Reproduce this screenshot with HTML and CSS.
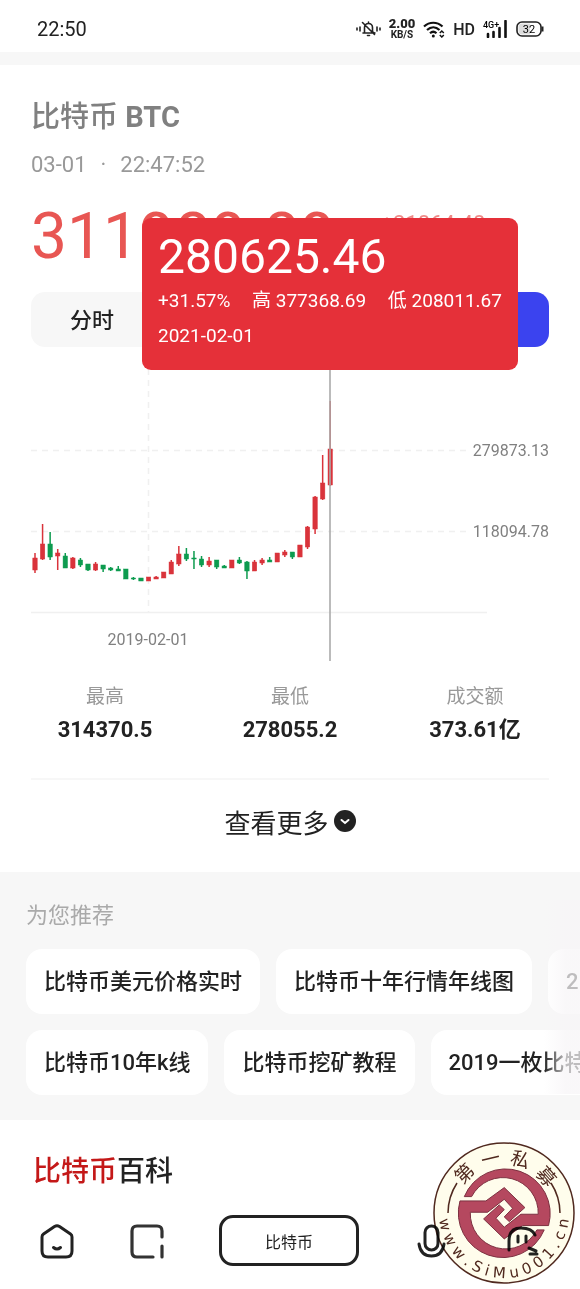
FILE: index.html
```html
<!DOCTYPE html>
<html lang="zh-CN">
<head>
  <meta charset="UTF-8">
  <meta name="viewport" content="width=device-width, initial-scale=1">
  <title>比特币 BTC</title>
  <link rel="stylesheet" href="styles.css">
</head>
<body>
  <header class="status-bar">
    <span class="clock">22:50</span>
    <div class="status-icons">
      <svg width="25" height="18" viewBox="0 0 25 18" fill="none" stroke="#222" stroke-width="1.6" stroke-linecap="round">
        <path d="M1 8v2M4 7v4M21 7v4M24 8v2"/>
        <path d="M7 13h12M8.5 12V7.500a4 4 0 0 1 8 0V12l2 1M12.500 2v1M11.500 15.500h2M6.500 2.500l12 12"/>
      </svg>
      <span class="net-speed"><b>2.00</b><small>KB/S</small></span>
      <svg width="22" height="17" viewBox="0 0 22 17" fill="none" stroke="#111" stroke-width="2.2">
        <path d="M1 5.500c5.500-5 13-5 18.500 0M4 9c3.800-3.500 8.800-3.500 12.500 0M7 12.200c2-1.800 4.500-1.800 6.500 0"/>
        <circle cx="10.300" cy="15" r="1.500" fill="#111" stroke="none"/>
        <path d="M16.800 12l2-2 2 2M16.800 14l2 2 2-2" stroke-width="1.5"/>
      </svg>
      <span class="hd">HD</span>
      <svg width="25" height="18" viewBox="0 0 25 18">
        <text class="cell-type" x="0" y="8">4G+</text>
        <path d="M5 14v3M10.500 12v5M16.500 8v9M22.500 1v16" stroke="#111" stroke-width="2.6" stroke-linecap="round"/>
      </svg>
      <svg width="28" height="16" viewBox="0 0 28 16">
        <rect x="1" y="1" width="24" height="14" rx="5" fill="#fff" stroke="#222" stroke-width="1.6"/>
        <path d="M6 2.500h8v11H6a3.500 3.500 0 0 1-3.500-3.500V6A3.500 3.500 0 0 1 6 2.500z" fill="#ddd"/>
        <path d="M26.500 5.500v5" stroke="#222" stroke-width="2"/>
        <text class="battery-level" x="13" y="12" text-anchor="middle">32</text>
      </svg>
    </div>
  </header>

  <main>
    <section class="quote">
      <h1>比特币 <b>BTC</b></h1>
      <p class="time"><span>03-01</span><span>·</span><span>22:47:52</span></p>

      <div class="price-area">
        <div class="price-row">
          <span class="price">311989.89</span>
          <span class="change">+21864.48</span>
        </div>
        <div class="tabs">
          <button class="tab">分时</button>
          <button class="tab active" aria-label="月K"></button>
        </div>
        <div class="tooltip">
          <strong>280625.46</strong>
          <p class="range"><span>+31.57%</span><span>高 377368.69</span><span>低 208011.67</span></p>
          <p>2021-02-01</p>
        </div>
      </div>

      <svg class="chart" viewBox="0 0 518 300">
        <g class="grid">
          <path d="M0 103.500H436M0 184.500H436M117.500 0V265" stroke-dasharray="6 5"/>
          <path d="M0 265.500H456"/>
        </g>
        <g id="candles"></g>
        <path class="cursor" d="M299 0V314"/>
        <text x="518" y="109" text-anchor="end">279873.13</text>
        <text x="518" y="190" text-anchor="end">118094.78</text>
        <text x="117" y="298" text-anchor="middle">2019-02-01</text>
      </svg>

      <dl class="stats">
        <div><dt>最高</dt><dd>314370.5</dd></div>
        <div><dt>最低</dt><dd>278055.2</dd></div>
        <div><dt>成交额</dt><dd>373.61亿</dd></div>
      </dl>

      <a class="more" href="#">查看更多
        <svg width="22" height="22" viewBox="0 0 22 22">
          <circle cx="11" cy="11" r="11" fill="#222"/>
          <path d="M7.500 10l3.500 3 3.500-3" fill="none" stroke="#fff" stroke-width="2" stroke-linecap="round"/>
        </svg>
      </a>
    </section>

    <section class="recommend">
      <h2>为您推荐</h2>
      <div class="chips">
        <a href="#">比特币美元价格实时</a>
        <a href="#">比特币十年行情年线图</a>
        <a href="#">2</a>
      </div>
      <div class="chips">
        <a href="#">比特币10年k线</a>
        <a href="#">比特币挖矿教程</a>
        <a href="#">2019一枚比特</a>
      </div>
    </section>

    <section class="wiki">
      <h2><em>比特币</em>百科</h2>
    </section>
  </main>

  <nav class="bottom-nav">
    <button aria-label="主页">
      <svg width="36" height="36" viewBox="0 0 36 36" fill="none" stroke="#222" stroke-width="3" stroke-linecap="round" stroke-linejoin="round">
        <path d="M15.500 3.500L4.500 11Q3 12 3 14v14q0 6 6 6h18q6 0 6-6V14q0-2-1.500-3L20.500 3.500Q18 2 15.500 3.500z"/>
        <path d="M14.500 24.500q3.500 3 7 0"/>
      </svg>
    </button>
    <button aria-label="窗口">
      <svg width="36" height="36" viewBox="0 0 36 36" fill="none" stroke="#333" stroke-width="3.2" stroke-linecap="round">
        <path d="M24 34H8q-5 0-5-5V8q0-5 5-5h20q5 0 5 5v6M33 23v11"/>
      </svg>
    </button>
    <button class="search">比特币</button>
    <button aria-label="语音">
      <svg width="36" height="36" viewBox="0 0 36 36" fill="none" stroke="#222" stroke-width="3" stroke-linecap="round">
        <rect x="12" y="3" width="13" height="24" rx="6.500"/>
        <path d="M6 21c1 7 5 12 12.500 12S30 28 31 21"/>
      </svg>
    </button>
    <button aria-label="我的">
      <svg width="36" height="36" viewBox="0 0 36 36" fill="none" stroke="#222" stroke-width="3" stroke-linecap="round">
        <path d="M6 27V18Q6 5 18 5q11 0 14 7M15 13v6M23 13v6M26 25l7 3M27 31h7"/>
      </svg>
    </button>
  </nav>

  <svg class="seal" viewBox="0 0 142 142">
    <defs>
      <path id="arcBottom" d="M6 71a65 65 0 0 0 130 0"/>
      <path id="hook" d="M130 203A134 134 0 0 1 383 290H305L250 330 188 270 235 228 250 242 225 268 250 295 300 256H352A106 106 0 0 0 152 203z"/>
    </defs>
    <circle cx="71" cy="71" r="70" fill="#fffdec" stroke="#50291f" stroke-width="1.5"/>
    <path d="M15 71a56 56 0 0 1 9-30M118 41a56 56 0 0 1 9 30" fill="none" stroke="#50291f" stroke-width="1.5"/>
    <g class="emblem" transform="translate(-12 -13) scale(.333)">
      <use href="#hook"/>
      <use href="#hook" transform="rotate(180 250 253)"/>
    </g>
    <g class="seal-name">
      <text x="71" y="22" transform="rotate(-45 71 71)">第</text>
      <text x="71" y="22" transform="rotate(-14 71 71)">一</text>
      <text x="71" y="22" transform="rotate(17 71 71)">私</text>
      <text x="71" y="22" transform="rotate(49 71 71)">募</text>
    </g>
    <text class="seal-url"><textPath href="#arcBottom" startOffset="50%" text-anchor="middle">w w w . S i M u 0 0 1 . c n</textPath></text>
  </svg>

  <script src="chart.js"></script>
</body>
</html>
```
FILE: styles.css
```css
* {
  box-sizing: border-box;
}

body {
  margin: 0;
  position: relative;
  background: #fff;
  color: #222;
  font-family: Roboto, "Noto Sans CJK SC", sans-serif;
  overflow-x: hidden;
}

h1, h2, p, dl, dd {
  margin: 0;
}

a {
  color: inherit;
  text-decoration: none;
}

button {
  padding: 0;
  border: none;
  background: none;
  color: inherit;
  font-family: inherit;
}

svg {
  display: block;
}

.status-bar {
  display: flex;
  justify-content: space-between;
  align-items: center;
  height: 65px;
  padding: 6px 36px 0 37px;
  border-bottom: 13px solid #f7f7f7;
}

.clock {
  font-size: 20px;
}

.status-icons {
  display: flex;
  align-items: center;
  gap: 8px;
}

.net-speed {
  display: grid;
  text-align: center;
  font-size: 13px;
  line-height: 12px;
  font-weight: 700;
}

.net-speed small {
  font-size: 10px;
  line-height: 10px;
}

.hd {
  font-size: 16px;
  font-weight: 500;
}

.cell-type {
  font-size: 9px;
  font-weight: 500;
}

.battery-level {
  font-size: 11px;
}

.quote {
  padding: 32px 31px 0;
}

h1 {
  font-size: 29px;
  line-height: 40px;
  font-weight: 500;
  color: #808080;
}

.time {
  display: flex;
  gap: 14px;
  margin-top: 14px;
  font-size: 22px;
  line-height: 28px;
  color: #999;
}

.price-area {
  position: relative;
  padding-top: 23px;
}

.price-row {
  display: flex;
  gap: 45px;
  height: 90px;
  color: #e85653;
}

.price {
  font-size: 64px;
  line-height: 70px;
}

.change {
  padding-top: 9px;
  font-size: 22px;
  line-height: 26px;
  opacity: .7;
}

.tabs {
  display: grid;
  grid-template-columns: 122px repeat(3, 1fr);
  height: 55px;
  border-radius: 14px;
  background: #f7f7f7;
}

.tab {
  padding-bottom: 4px;
  font-size: 22px;
  font-weight: 500;
}

.tab.active {
  grid-column: 4;
  border-radius: 14px;
  background: #3b43ef;
}

/* floats over the price and the tabs while a candle is selected */
.tooltip {
  position: absolute;
  top: 39px;
  left: 111px;
  right: 31px;
  padding: 12px 16px 17px;
  border-radius: 9px;
  background: #e53039;
  color: #fff;
  font-size: 19px;
  line-height: 35px;
}

.tooltip strong {
  display: block;
  font-size: 48px;
  line-height: 53px;
  font-weight: 400;
}

.tooltip .range {
  display: flex;
  justify-content: space-between;
  white-space: nowrap;
}

.chart {
  width: 100%;
  overflow: visible;
}

.chart text {
  font-size: 16px;
  fill: #808080;
}

.grid {
  fill: none;
  stroke: #f0f0f0;
  stroke-width: 1.5;
}

.cursor {
  stroke: #aaa;
  stroke-opacity: .8;
  stroke-width: 2;
}

.up {
  fill: #d9333b;
  stroke: #d9333b;
}

.down {
  fill: #0d9b4f;
  stroke: #0d9b4f;
}

.stats {
  display: grid;
  grid-template-columns: 148px 1fr 148px;
  height: 133px;
  padding-top: 34px;
  border-bottom: 2px solid #f7f7f7;
  text-align: center;
}

.stats dt {
  font-size: 19px;
  line-height: 32px;
  color: #999;
}

.stats dd {
  font-size: 22px;
  line-height: 34px;
  font-weight: 700;
}

.more {
  display: flex;
  justify-content: center;
  align-items: center;
  gap: 5px;
  height: 92px;
  padding-bottom: 10px;
  font-size: 26px;
}

.recommend {
  position: relative;
  padding: 27px 0 25px 26px;
  background: #f7f7f7;
  overflow: hidden;
}

.recommend::after {
  content: "";
  position: absolute;
  inset: 28px 0 26px auto;
  width: 36px;
  background: linear-gradient(to right, #f7f5f700, #f7f5f7bb 60%);
}

.recommend h2 {
  font-size: 22px;
  line-height: 34px;
  font-weight: 400;
  color: #aaa;
}

.chips {
  display: flex;
  gap: 16px;
  margin-top: 16px;
}

.chips a {
  flex: none;
  padding: 0 18px;
  border-radius: 16px;
  background: #fff;
  font-size: 22px;
  line-height: 65px;
  font-weight: 500;
}

.wiki {
  padding: 32px 33px 0;
}

.wiki h2 {
  font-size: 28px;
  line-height: 40px;
  font-weight: 500;
}

.wiki em {
  font-style: normal;
  color: #c41818;
}

.bottom-nav {
  display: flex;
  justify-content: space-between;
  align-items: center;
  padding: 23px 41px 23px 39px;
}

.search {
  width: 140px;
  height: 51px;
  border: 3px solid #222;
  border-radius: 14px;
  font-size: 16px;
}

/* round watermark laid over the corner of the page */
.seal {
  position: absolute;
  right: 5px;
  bottom: 5px;
  width: 142px;
  mix-blend-mode: multiply;
}

.emblem {
  fill: #b5485f;
  stroke: #7c3040;
  stroke-width: 3;
}

.seal-name {
  font-size: 19px;
  fill: #50291f;
  text-anchor: middle;
}

.seal-url {
  font-family: "DejaVu Sans", sans-serif;
  font-size: 15px;
  fill: #50291f;
}
```
FILE: chart.js
```js
// high, body top, body bottom, low, direction
const candles = [
  [183, 188, 200, 203, 'up'],
  [154, 174, 189, 190, 'up'],
  [162, 174, 187, 190, 'down'],
  [179, 183, 186, 200, 'up'],
  [183, 186, 198, 198, 'down'],
  [187, 188, 198, 199, 'up'],
  [188, 190, 195, 197, 'down'],
  [194, 194, 200, 201, 'down'],
  [192, 194, 200, 201, 'up'],
  [195, 195, 199, 202, 'down'],
  [197, 198, 200, 201, 'down'],
  [196, 199, 201, 201, 'down'],
  [199, 199, 209, 209, 'down'],
  [207, 208, 209, 210, 'down'],
  [208, 208, 211, 211, 'down'],
  [207, 207, 211, 211, 'up'],
  [206, 207, 209, 209, 'up'],
  [202, 202, 208, 208, 'up'],
  [190, 192, 204, 204, 'up'],
  [176, 184, 194, 196, 'up'],
  [178, 184, 189, 191, 'down'],
  [181, 188, 189, 199, 'down'],
  [186, 189, 195, 197, 'down'],
  [187, 191, 195, 197, 'up'],
  [190, 190, 197, 199, 'down'],
  [195, 196, 198, 198, 'down'],
  [190, 190, 198, 198, 'up'],
  [187, 190, 193, 194, 'down'],
  [191, 192, 201, 209, 'down'],
  [190, 192, 201, 201, 'up'],
  [188, 190, 193, 195, 'up'],
  [187, 190, 192, 192, 'down'],
  [183, 183, 192, 192, 'up'],
  [180, 182, 185, 187, 'up'],
  [182, 182, 187, 189, 'down'],
  [175, 175, 187, 187, 'up'],
  [156, 157, 177, 179, 'up'],
  [126, 127, 159, 164, 'up'],
  [85, 113, 129, 130, 'up'],
  [31, 79, 115, 116, 'up']
];

// space above the highest candle
const offset = 23;

let marks = '';
candles.forEach(([high, top, bottom, low, dir], i) => {
  const x = 4 + i * 7.57;
  marks += `<g class="${dir}"><path d="M${x} ${high + offset}V${low + offset}" stroke-width="1.5"/>`;
  marks += `<rect x="${x - 2.2}" y="${top + offset}" width="4.4" height="${bottom - top}" stroke-width=".5"/></g>`;
});
document.getElementById('candles').innerHTML = marks;
```
